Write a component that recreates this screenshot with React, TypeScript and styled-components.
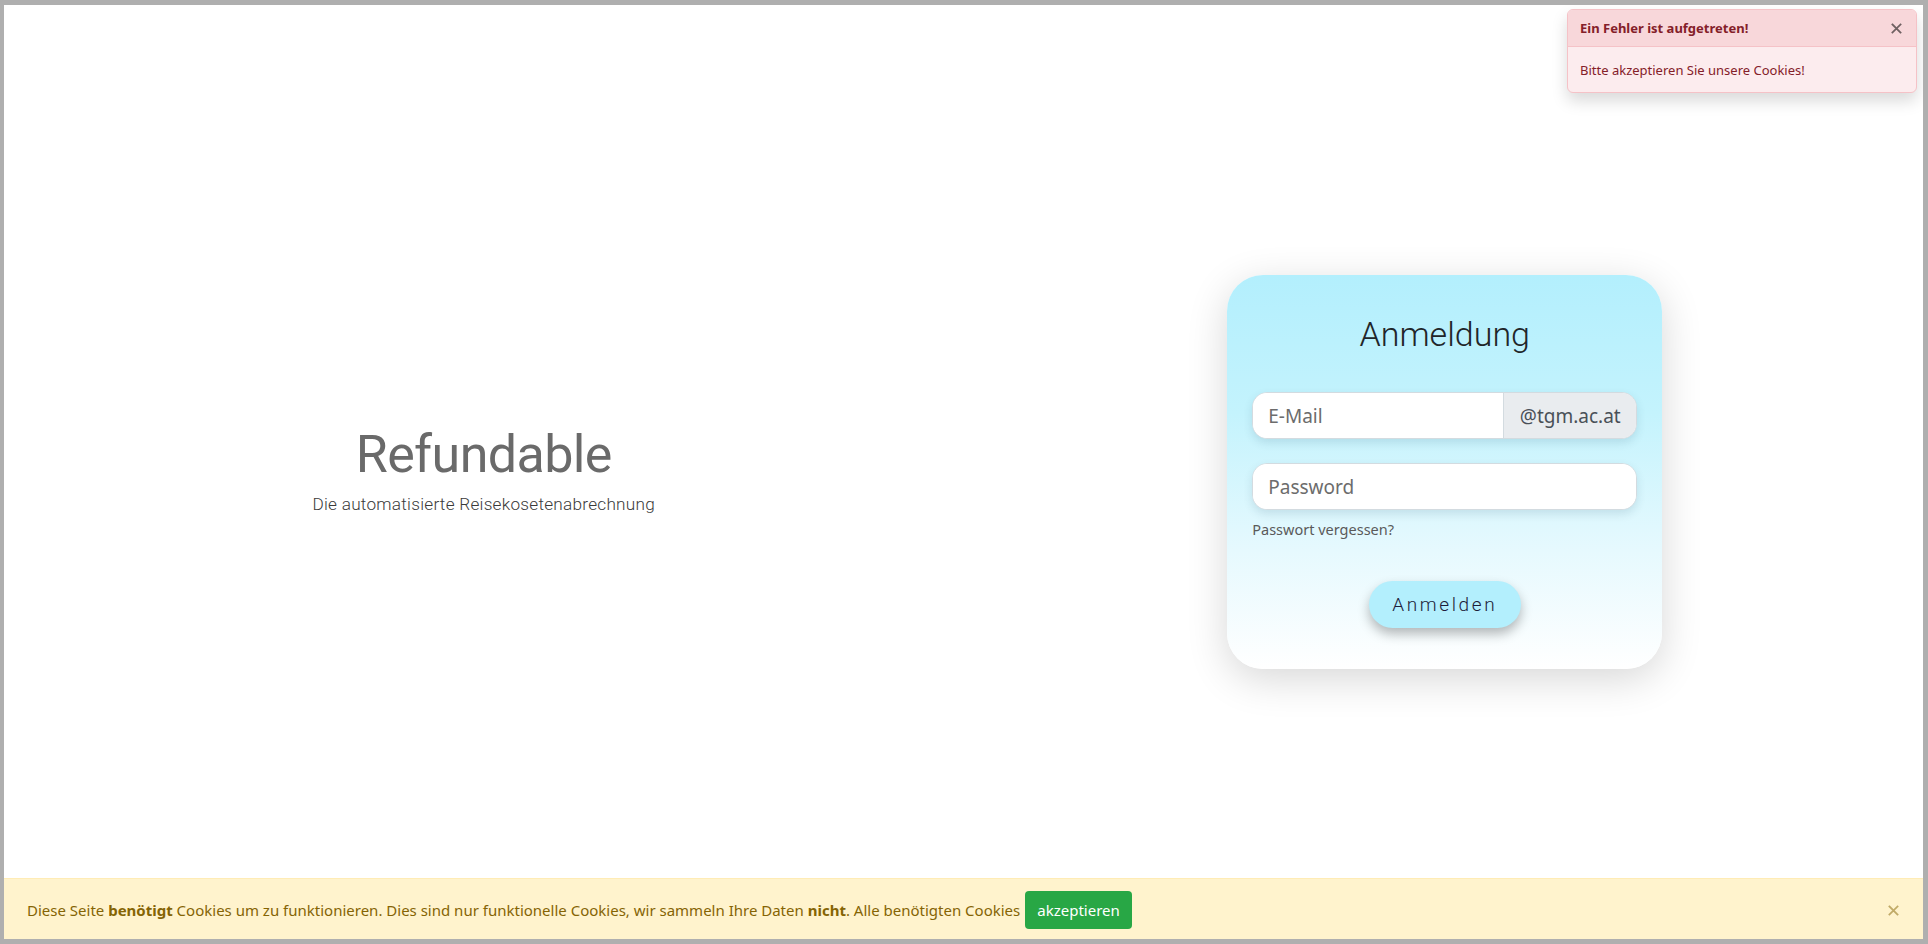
import React from "react";
import styled, { createGlobalStyle } from "styled-components";

const GlobalStyle = createGlobalStyle`
  html, body { margin: 0; padding: 0; background: #afafaf; }
  * { box-sizing: border-box; }
  body { font-family: "Noto Sans", "Open Sans", sans-serif; }
`;

const Frame = styled.div`
  width: 100vw;
  height: 100vh;
  padding: 5px 5px 5px 4px;
  background: #afafaf;
`;

const Screen = styled.div`
  position: relative;
  width: 100%;
  height: 100%;
  background: #ffffff;
  display: flex;
  overflow: hidden;
`;

const Half = styled.div`
  flex: 1 1 0;
  display: flex;
  align-items: center;
  justify-content: center;
`;

const Brand = styled.div`
  display: flex;
  flex-direction: column;
  align-items: center;
  margin-top: -6px;
`;

const BrandTitle = styled.h1`
  margin: 0;
  font-family: Roboto, "Noto Sans", sans-serif;
  font-weight: 400;
  font-size: 52px;
  line-height: 60px;
  letter-spacing: -0.6px;
  color: #6a6a6a;
`;

const BrandSub = styled.p`
  margin: 9px 0 0;
  font-family: Roboto, "Noto Sans", sans-serif;
  font-weight: 300;
  font-size: 17.2px;
  letter-spacing: 0.25px;
  color: #3a3a3a;
`;

const Card = styled.div`
  width: 435px;
  padding: 39px 25px 41px;
  border-radius: 36px;
  background: linear-gradient(180deg, #b3effd 0%, #c4f3fd 35%, #e6f9fe 70%, #ffffff 100%);
  box-shadow: 0 10px 40px rgba(0, 0, 0, 0.16);
  display: flex;
  flex-direction: column;
  margin-left: 3px;
`;

const CardTitle = styled.h2`
  margin: 0 0 37px;
  text-align: center;
  font-family: Roboto, "Noto Sans", sans-serif;
  font-weight: 300;
  font-size: 34px;
  line-height: 41px;
  color: #212529;
`;

const InputGroup = styled.div<{ $mb?: number }>`
  display: flex;
  height: 47px;
  border-radius: 15px;
  border: 1px solid #d3dbe0;
  overflow: hidden;
  background: #fff;
  box-shadow: 0 4px 10px rgba(0, 60, 80, 0.12);
  margin-bottom: ${(p) => p.$mb ?? 0}px;
`;

const Field = styled.input`
  flex: 1 1 auto;
  min-width: 0;
  border: none;
  outline: none;
  padding: 0 15px;
  font-family: "Noto Sans", "Open Sans", sans-serif;
  font-size: 19px;
  color: #495057;
  background: #fff;
  &::placeholder { color: #6c6c6c; }
`;

const Addon = styled.span`
  flex: 0 0 133px;
  display: flex;
  align-items: center;
  justify-content: center;
  background: #e9ecef;
  border-left: 1px solid #d3dbe0;
  font-family: "Noto Sans", "Open Sans", sans-serif;
  font-size: 19px;
  color: #495057;
`;

const ForgotLink = styled.a`
  margin-top: 8px;
  font-family: "Noto Sans", "Open Sans", sans-serif;
  font-size: 14.5px;
  line-height: 22px;
  color: #5a5a5a;
  text-decoration: none;
  align-self: flex-start;
`;

const SubmitButton = styled.button`
  align-self: center;
  margin-top: 41px;
  width: 152px;
  height: 47px;
  border: none;
  border-radius: 24px;
  background: #b3effd;
  font-family: Roboto, "Noto Sans", sans-serif;
  font-weight: 300;
  font-size: 19px;
  letter-spacing: 2.6px;
  color: #1d1d3a;
  box-shadow: 0 6px 12px rgba(0, 0, 0, 0.28);
  cursor: pointer;
`;

const Toast = styled.div`
  position: absolute;
  top: 4px;
  right: 6px;
  width: 350px;
  border: 1px solid #f5c2c7;
  border-radius: 6px;
  overflow: hidden;
  background: #fcecee;
  box-shadow: 0 8px 16px rgba(0, 0, 0, 0.15);
  font-family: "Noto Sans", "Open Sans", sans-serif;
  font-size: 13px;
  color: #842029;
`;

const ToastHeader = styled.div`
  display: flex;
  align-items: center;
  justify-content: space-between;
  height: 37px;
  padding: 0 12px 0 12px;
  background: #f8d7da;
  border-bottom: 1px solid #f5c2c7;
  font-weight: 700;
`;

const ToastBody = styled.div`
  height: 45px;
  padding: 0 12px;
  display: flex;
  align-items: center;
`;

const CloseButton = styled.button<{ $opacity?: number }>`
  border: none;
  background: transparent;
  padding: 0;
  display: flex;
  align-items: center;
  justify-content: center;
  width: 16px;
  height: 16px;
  opacity: ${(p) => p.$opacity ?? 0.5};
  cursor: pointer;
`;

const CookieBar = styled.div`
  position: absolute;
  left: 0;
  right: 0;
  bottom: 0;
  height: 61px;
  display: flex;
  align-items: center;
  padding: 2px 22px 0 23px;
  background: #fff3cd;
  border-top: 1px solid #ffecb5;
  font-family: "Noto Sans", "Open Sans", sans-serif;
  font-size: 15px;
  color: #856404;
`;

const CookieText = styled.span`
  flex: 1 1 auto;
  display: flex;
  align-items: center;
  white-space: nowrap;
  b { font-weight: 700; }
`;

const AcceptButton = styled.button`
  margin-left: 5px;
  height: 38px;
  padding: 0 12px;
  border: none;
  border-radius: 4px;
  background: #28a745;
  color: #fff;
  font-family: "Noto Sans", "Open Sans", sans-serif;
  font-size: 15px;
  cursor: pointer;
`;

const XIcon = ({ color, size }: { color: string; size: number }) => (
  <svg width={size} height={size} viewBox="0 0 16 16">
    <path d="M3 3 L13 13 M13 3 L3 13" stroke={color} strokeWidth={2.2} strokeLinecap="square" />
  </svg>
);

export default function App() {
  return (
    <>
      <GlobalStyle />
      <Frame>
        <Screen>
          <Half>
            <Brand>
              <BrandTitle>Refundable</BrandTitle>
              <BrandSub>Die automatisierte Reisekosetenabrechnung</BrandSub>
            </Brand>
          </Half>
          <Half>
            <Card>
              <CardTitle>Anmeldung</CardTitle>
              <InputGroup $mb={24}>
                <Field placeholder="E-Mail" />
                <Addon>@tgm.ac.at</Addon>
              </InputGroup>
              <InputGroup>
                <Field placeholder="Password" type="password" />
              </InputGroup>
              <ForgotLink href="#">Passwort vergessen?</ForgotLink>
              <SubmitButton>Anmelden</SubmitButton>
            </Card>
          </Half>

          <Toast>
            <ToastHeader>
              <span>Ein Fehler ist aufgetreten!</span>
              <CloseButton $opacity={0.55}>
                <XIcon color="#000" size={13} />
              </CloseButton>
            </ToastHeader>
            <ToastBody>Bitte akzeptieren Sie unsere Cookies!</ToastBody>
          </Toast>

          <CookieBar>
            <CookieText>
              Diese Seite&nbsp;<b>benötigt</b>&nbsp;Cookies um zu funktionieren. Dies sind nur funktionelle
              Cookies, wir sammeln Ihre Daten&nbsp;<b>nicht</b>. Alle benötigten Cookies
              <AcceptButton>akzeptieren</AcceptButton>
            </CookieText>
            <CloseButton $opacity={0.5}>
              <XIcon color="#856404" size={13} />
            </CloseButton>
          </CookieBar>
        </Screen>
      </Frame>
    </>
  );
}
